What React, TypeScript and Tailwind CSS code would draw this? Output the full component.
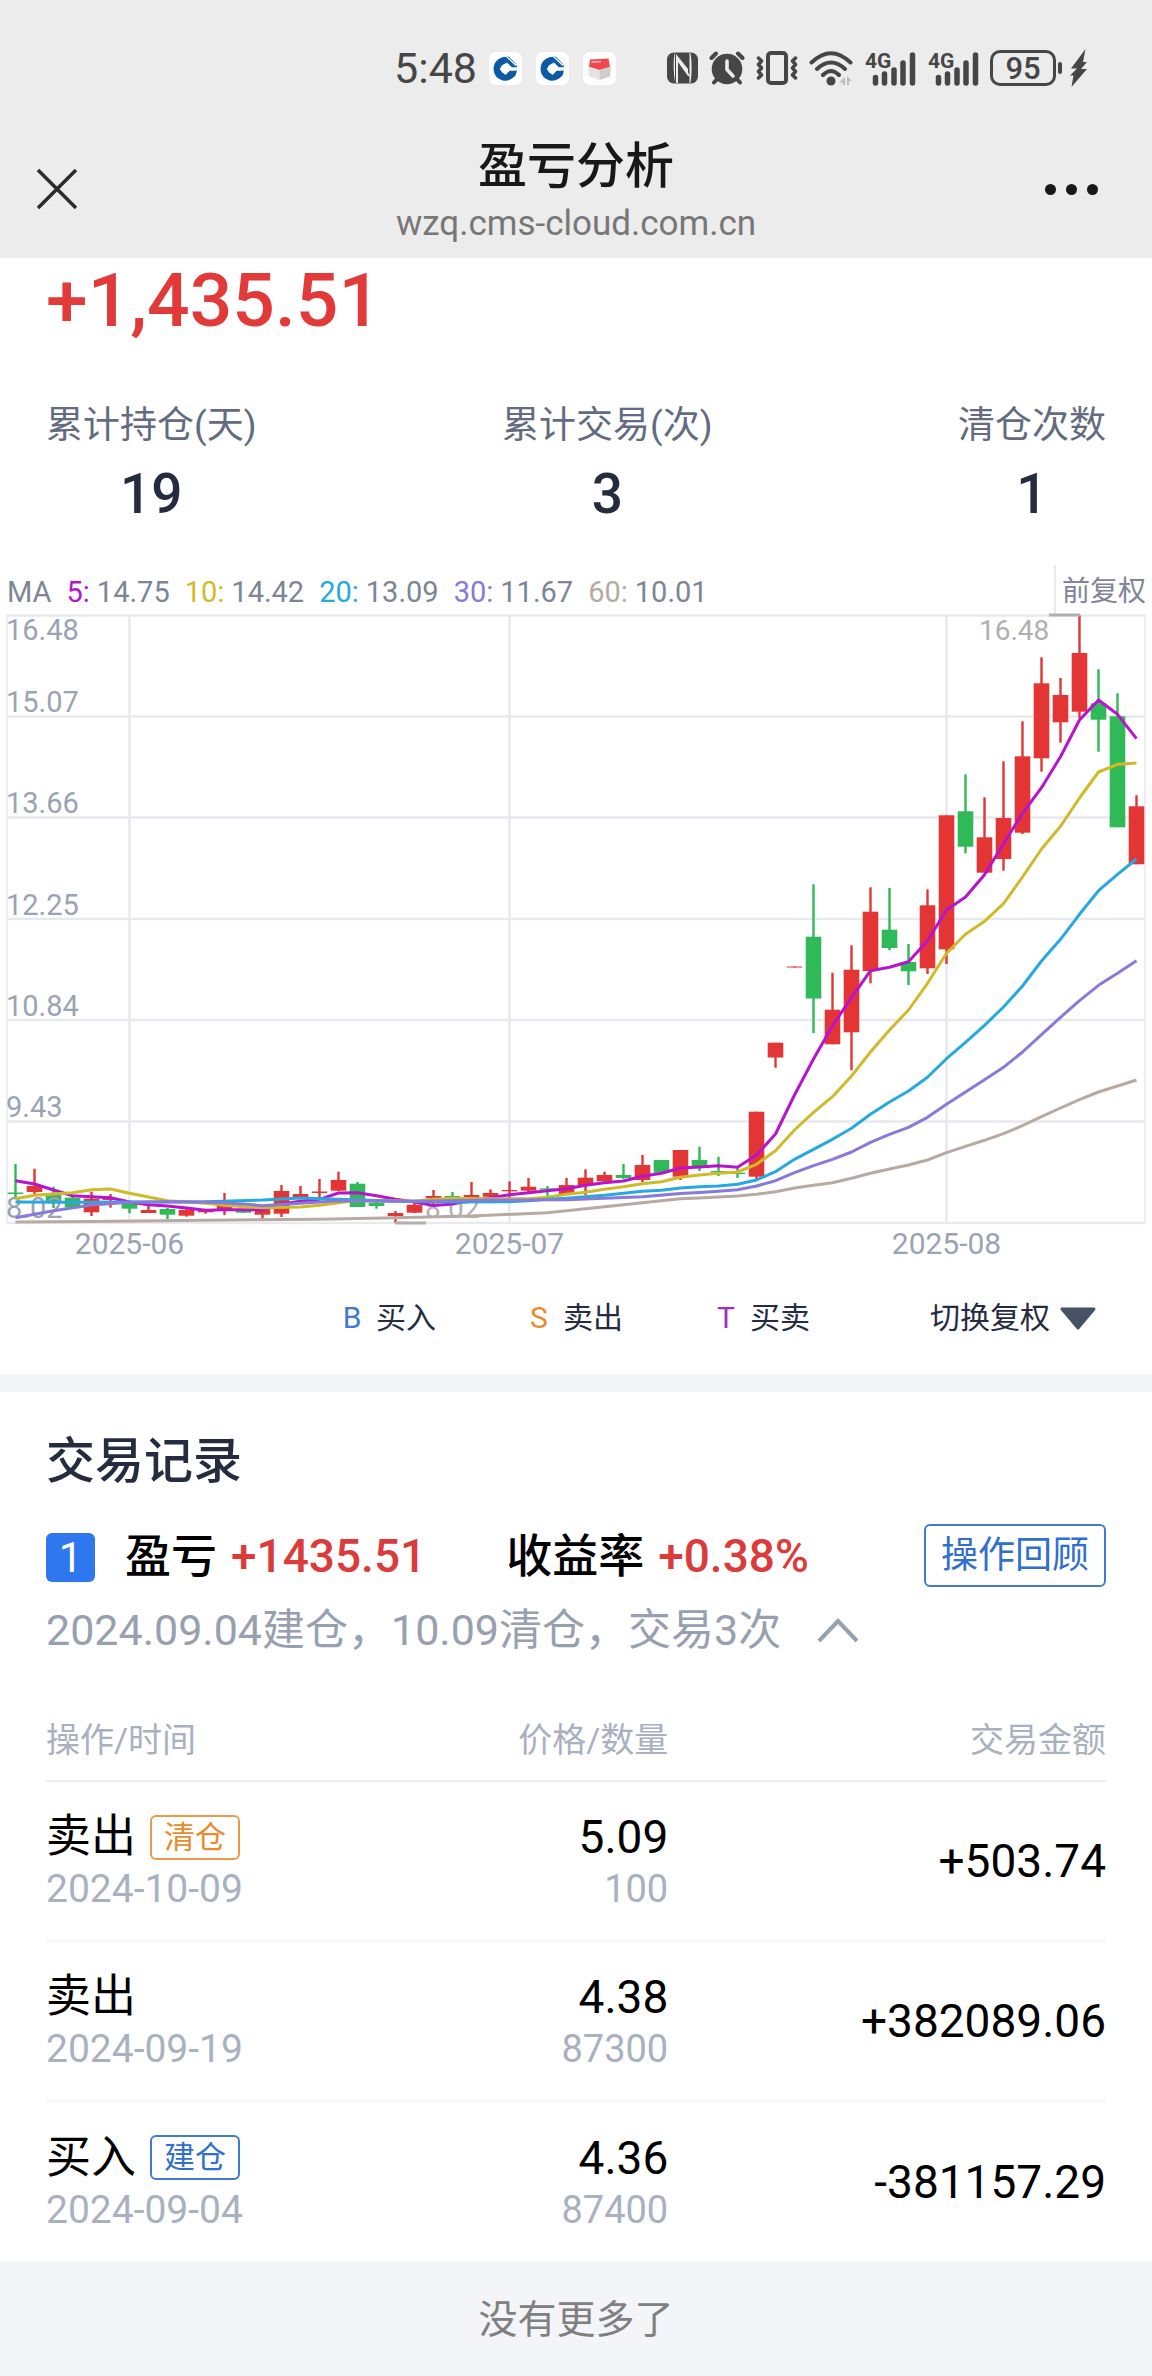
import React from "react";

type Candle = [high: number, top: number, bottom: number, low: number, rising: 0 | 1];

const STEP = 19;
const FIRST_X = 15.5;
const xOf = (i: number) => FIRST_X + STEP * i;

const candles: Candle[] = [
  [1164, 1192.5, 1194, 1199, 0], [1168.7, 1186, 1192, 1195, 1], [1186.7, 1194, 1201, 1208, 0],
  [1197, 1197.7, 1207.3, 1208, 0], [1191.7, 1198.7, 1212.3, 1216, 1], [1194, 1198.5, 1200, 1207.7, 1],
  [1202.7, 1203.7, 1208.7, 1213.3, 0], [1205.3, 1210, 1213, 1213, 1], [1208, 1209, 1214.7, 1219, 0],
  [1209, 1210, 1215.7, 1216.7, 1], [1209, 1211, 1212.3, 1213.7, 1], [1193, 1206, 1209, 1215, 1],
  [1209, 1210, 1212.7, 1213, 0], [1208, 1208.7, 1214.7, 1218.7, 1], [1185, 1191, 1213.7, 1217, 1],
  [1186, 1194, 1198.7, 1199, 1], [1179, 1191.5, 1193, 1197.7, 1], [1171.7, 1180, 1190.7, 1191, 1],
  [1182, 1183.7, 1207, 1207, 0], [1202, 1202.7, 1206, 1208.7, 0], [1211, 1213, 1216, 1223, 1],
  [1201.7, 1204.7, 1212.7, 1213, 1], [1190, 1196, 1198.3, 1204, 1], [1192, 1196, 1198.3, 1199, 0],
  [1182, 1195, 1198, 1199, 1], [1189.3, 1193, 1196.7, 1197, 1], [1181.3, 1190, 1191.3, 1198, 1],
  [1178, 1186.7, 1190.7, 1194, 1], [1186, 1188.3, 1189.7, 1196.7, 0], [1178, 1185, 1194, 1195, 1],
  [1169.3, 1177.7, 1185.3, 1195, 1], [1171.7, 1175, 1181.3, 1182, 1], [1164, 1175, 1178, 1179, 0],
  [1155, 1165, 1180, 1182, 1], [1160, 1160, 1172.7, 1173, 0], [1150, 1150, 1176.7, 1180, 1],
  [1146.7, 1160, 1167, 1171, 0], [1156.7, 1171, 1172.3, 1176, 0], [1168, 1172.7, 1174, 1178, 0],
  [1111.7, 1111.7, 1176.7, 1179, 1], [1042.7, 1042.7, 1057.5, 1067.7, 1], [966.5, 966.5, 967.5, 967.5, 1],
  [884.3, 936.7, 998.5, 1033, 0], [972.7, 1009.7, 1044.3, 1044.3, 1], [945.3, 969.7, 1032.3, 1070.3, 1],
  [887.3, 911.7, 971, 983.3, 1], [888, 929.7, 948, 950.3, 0], [944, 962, 971.3, 985, 0],
  [889.3, 905.3, 968.3, 974, 1], [815.3, 815.3, 949.3, 964, 1], [774.3, 811.3, 846.7, 853.3, 0],
  [797.3, 837.3, 872.7, 872.7, 1], [761.3, 818, 859, 870.7, 1], [721.3, 756.3, 832.7, 834, 1],
  [657.3, 683.3, 758.3, 771.7, 1], [678, 695, 722.3, 742.7, 1], [615.3, 653, 711.7, 718, 1],
  [669.3, 703.3, 719.7, 751.7, 0], [693.3, 716.3, 827.3, 827.3, 0], [795.3, 806.3, 864.3, 864.3, 1],
];

const series: { color: string; points: [number, number][] }[] = [
  {
    color: "#b6aaa3",
    points: [[0, 1222], [4, 1221.5], [10, 1220.3], [16, 1219.3], [20, 1217.7], [24, 1216], [28, 1212.7], [30, 1208.7], [33, 1202.7], [35, 1198.7], [36, 1198], [38, 1196], [39, 1194.3], [40, 1191.7], [41, 1188], [42, 1185.3], [43, 1182.7], [44, 1178.3], [45, 1173.3], [46, 1169], [47, 1165], [48, 1160], [49, 1152.7], [50, 1146.3], [51, 1140.3], [52, 1133.7], [53, 1125.7], [54, 1116.7], [55, 1108], [56, 1099.7], [57, 1092], [58, 1086], [59, 1080]],
  },
  {
    color: "#b813ce",
    points: [[0, 1180.7], [1, 1184], [2, 1190], [3, 1195.7], [4, 1196.7], [5, 1197.7], [6, 1202], [7, 1204.7], [8, 1206], [9, 1208], [10, 1210.3], [11, 1209.7], [13, 1209.7], [14, 1204], [15, 1201.3], [16, 1199.3], [17, 1193], [18, 1192.7], [19, 1195.7], [20, 1199.3], [21, 1202], [22, 1205.5], [23, 1204], [24, 1200.3], [25, 1197.7], [26, 1194.7], [27, 1192.7], [28, 1190.7], [29, 1188.7], [30, 1185.3], [31, 1182.7], [32, 1181], [33, 1176.3], [34, 1173.3], [35, 1168], [36, 1167], [37, 1165.7], [38, 1167.3], [39, 1155], [40, 1134], [41, 1095], [42, 1059], [43, 1025.7], [44, 997.7], [45, 970.7], [46, 967.3], [47, 961.7], [48, 940.7], [49, 910], [50, 897], [51, 874.7], [52, 843.7], [53, 813.3], [54, 787.7], [55, 756.7], [56, 720], [57, 700], [58, 714.3], [59, 738.7]],
  },
  {
    color: "#cfba2a",
    points: [[0, 1198.7], [1, 1195.3], [2, 1194], [3, 1192.7], [4, 1189.7], [5, 1189], [6, 1193.3], [7, 1197], [8, 1200.7], [9, 1202], [10, 1203.3], [11, 1205.3], [12, 1206.7], [13, 1207.7], [15, 1207], [16, 1205.3], [17, 1202.7], [18, 1200.3], [20, 1200.7], [21, 1201.3], [22, 1199.3], [23, 1198.3], [25, 1198.7], [27, 1198.7], [28, 1197.3], [29, 1194.3], [30, 1192.3], [31, 1189.3], [32, 1186.7], [33, 1183.7], [34, 1181.7], [35, 1177.3], [36, 1175], [37, 1173.3], [38, 1172], [39, 1164.3], [40, 1150.7], [41, 1130], [42, 1112.3], [43, 1096.7], [44, 1076], [45, 1052], [46, 1030], [47, 1010], [48, 983.3], [49, 953.3], [50, 934.3], [51, 921.3], [52, 903.7], [53, 877], [54, 849], [55, 826.3], [56, 798], [57, 772], [58, 764.3], [59, 763]],
  },
  {
    color: "#26a9e0",
    points: [[0, 1202], [3, 1202.3], [6, 1202], [10, 1201.7], [13, 1200], [15, 1198], [17, 1199.3], [20, 1201.3], [23, 1202], [26, 1201.7], [27, 1200.7], [28, 1199.3], [29, 1198.3], [30, 1196.7], [31, 1195.3], [32, 1193.3], [33, 1191.3], [34, 1190.3], [35, 1188], [36, 1186.7], [37, 1186], [38, 1184.3], [39, 1180], [40, 1171.7], [41, 1159.3], [42, 1149.3], [43, 1139.3], [44, 1128.3], [45, 1114.3], [46, 1102], [47, 1091], [48, 1077.3], [49, 1058.7], [50, 1042.3], [51, 1025.3], [52, 1007], [53, 986], [54, 961], [55, 939.3], [56, 914.3], [57, 890.7], [58, 874.3], [59, 859]],
  },
  {
    color: "#877ad9",
    points: [[0, 1217.7], [2, 1210.7], [4, 1205], [6, 1202.3], [8, 1201.7], [10, 1202], [12, 1204], [13, 1205.7], [15, 1203.3], [17, 1200.7], [20, 1201.3], [22, 1201], [25, 1200], [29, 1199.7], [31, 1198.3], [33, 1196.7], [35, 1193.5], [36, 1192.5], [37, 1191.3], [38, 1189.7], [39, 1186], [40, 1180.7], [41, 1172.7], [42, 1165.7], [43, 1159.3], [44, 1152], [45, 1142.3], [46, 1134.3], [47, 1127.3], [48, 1117.3], [49, 1104.3], [50, 1092], [51, 1079.7], [52, 1067.3], [53, 1052], [54, 1034.7], [55, 1017.3], [56, 1000.7], [57, 985.3], [58, 973.3], [59, 960.7]],
  },
];

const priceLabels: [string, number][] = [
  ["16.48", 640], ["15.07", 712], ["13.66", 813], ["12.25", 915], ["10.84", 1016], ["9.43", 1117], ["8.02", 1218],
];
const gridY = [615.5, 716.5, 817.5, 919, 1020, 1121.5, 1223];
const months: [string, number][] = [["2025-06", 129.5], ["2025-07", 509.5], ["2025-08", 946.5]];

function PriceChart() {
  return (
    <svg viewBox="0 613 1152 649" className="block h-auto w-full" role="img" aria-label="K线图">
      <g stroke="#e8e9ee" strokeWidth="2.5" fill="none">
        {gridY.map((y) => <path key={y} d={`M7 ${y}H1145`} />)}
        {months.map(([m, x]) => <path key={m} d={`M${x} 615V1223`} />)}
        <path d="M7 615V1223M1145 615V1223" strokeWidth="1.5" />
      </g>
      {candles.map(([high, top, bottom, low, rising], i) => {
        const fill = rising ? "#e43535" : "#2fb957";
        return (
          <g key={i} fill={fill}>
            <rect x={xOf(i) - 1.2} y={high} width="2.4" height={low - high} />
            <rect x={xOf(i) - 7.8} y={top} width="15.6" height={bottom - top} />
          </g>
        );
      })}
      <g fontSize="29" fill="#9aa3b5">
        {priceLabels.map(([t, y]) => <text key={t} x="6" y={y}>{t}</text>)}
      </g>
      <g fontSize="28" fill="#b0b0b0">
        <text x="425" y="1218">8.02</text>
        <text x="979" y="640">16.48</text>
        <path d="M395 1223H426M1049 615H1080" stroke="#b0b0b0" strokeWidth="3" />
      </g>
      {series.map((s) => (
        <polyline
          key={s.color}
          points={s.points.map(([i, y]) => `${xOf(i)},${y}`).join(" ")}
          fill="none"
          stroke={s.color}
          strokeWidth="3"
          strokeLinejoin="round"
        />
      ))}
      <g fontSize="30" fill="#9aa3b5" textAnchor="middle">
        {months.map(([m, x]) => <text key={m} x={x} y="1254">{m}</text>)}
      </g>
    </svg>
  );
}

function BankIcon() {
  return (
    <svg viewBox="0 0 33 33" className="size-[33px]" aria-hidden="true">
      <rect width="33" height="33" rx="7" fill="#fff" />
      <path fill="none" stroke="#0b5aa5" strokeWidth="7" d="M18 8.700A8.300 8.300 0 1 0 24.200 19.500" />
      <path fill="#0b5aa5" d="M8 17L17 8V5H14L6 12ZM16.500 22L20 19L28 18.500L26 24L17 28H14L8 20Z" />
      <path fill="#0b5aa5" d="M17 9.500L22.800 15.200H28.200A11.500 11.500 0 0 0 26.500 11.500L20 4.800L17.500 4.200Z" />
      <path d="M16.500 11L22.300 17L16.500 23L10.700 17Z" fill="#fff" />
      <path d="M17.500 4.500L27 13.500M21.500 17.200H28.500" stroke="#fff" strokeWidth="1.200" />
    </svg>
  );
}

function BoxIcon() {
  return (
    <svg viewBox="0 0 33 33" className="size-[33px]" aria-hidden="true">
      <rect width="33" height="33" rx="7" fill="#fff" />
      <path d="M7 7.500L25.500 6.500L27 15L16.500 18L6 15Z" fill="#f0474c" />
      <path d="M8.500 10L18 9.500" stroke="#fbb" strokeWidth="1.500" />
      <path d="M5 14.500L16.500 18V28L6 24.500Z" fill="#e4e2e2" />
      <path d="M28 14.500L16.500 18V28L27 24.500Z" fill="#d0cdcd" />
    </svg>
  );
}

function NfcIcon() {
  return (
    <svg viewBox="0 0 31 32" className="h-8 w-[31px]" aria-hidden="true">
      <rect y="0.500" width="31" height="31" rx="7" fill="#464646" />
      <path d="M7.500 1.500C6 10 6.500 20 8 31L11 31V10L21 24V17L9 2ZM22.500 1V31H23.500C25 22 25 10 23.500 1Z" fill="#ececec" />
      <path d="M11.500 9L22.500 24" fill="none" stroke="#ececec" strokeWidth="1.500" />
      <path d="M8.500 2V31" fill="none" stroke="#464646" strokeWidth="1" />
    </svg>
  );
}

function AlarmIcon() {
  return (
    <svg viewBox="0 0 36 34" className="h-[34px] w-9" aria-hidden="true">
      <g stroke="#464646" strokeWidth="4" strokeLinecap="round" fill="none">
        <path d="M2.500 7L7 2.500M33.500 7L29 2.500M9 27L5 31.500M27 27L31 31.500" />
      </g>
      <circle cx="18" cy="18" r="15.300" fill="#464646" />
      <path d="M18 10V18.500L24 25" fill="none" stroke="#ececec" strokeWidth="3.600" strokeLinecap="round" />
    </svg>
  );
}

function VibrateIcon() {
  return (
    <svg viewBox="0 0 42 34" className="h-[34px] w-[42px]" aria-hidden="true">
      <g fill="none" stroke="#464646" strokeLinecap="round" strokeLinejoin="round">
        <rect x="12" y="2" width="18" height="30" rx="3" strokeWidth="4" />
        <path d="M2.500 7L5.500 10L2.500 13.500L5.500 17L2.500 20.500L5.500 24L2.500 27M39.500 7L36.500 10L39.500 13.500L36.500 17L39.500 20.500L36.500 24L39.500 27" strokeWidth="3.500" />
      </g>
    </svg>
  );
}

function WifiIcon() {
  return (
    <svg viewBox="0 0 44 35" className="h-[35px] w-11" aria-hidden="true">
      <g fill="none" stroke="#464646" strokeWidth="4" strokeLinecap="round">
        <path d="M2.500 11.500Q22 -7 41.500 11.500M8 18Q22 5 36 18M14 24Q22 16 30 24" />
      </g>
      <circle cx="22" cy="30" r="4.500" fill="#464646" />
      <path d="M36 26V34H34V31.500H30ZM38 34V25L43 30H40V34Z" fill="#bdbdbd" />
    </svg>
  );
}

function SignalIcon() {
  return (
    <svg viewBox="-1 -3 52 41" className="h-[41px] w-[52px]" aria-hidden="true">
      <text x="0" y="17" fontSize="21" fontWeight="700" fill="#464646">4G</text>
      <path d="M10.500 26.500V32M19.500 23V32M29 19V32M38 12V32M47.500 4V32" stroke="#464646" strokeWidth="5.500" strokeLinecap="round" />
    </svg>
  );
}

function StatusBar() {
  return (
    <div className="flex h-[136px] items-center justify-end pr-[64px] text-[#464646]">
      <span className="mr-3 text-[43px] leading-none">5:48</span>
      <div className="mr-[51px] flex gap-[14px]">
        <BankIcon />
        <BankIcon />
        <BoxIcon />
      </div>
      <div className="flex items-center gap-[11px]">
        <NfcIcon />
        <AlarmIcon />
        <VibrateIcon />
        <WifiIcon />
        <SignalIcon />
        <SignalIcon />
        <div className="flex items-center gap-[2px]">
          <span className="flex h-9 w-[66px] items-center justify-center rounded-[10px] border-[3px] border-[#464646] text-[31px] leading-none font-medium">
            95
          </span>
          <span className="h-3 w-1 rounded-full bg-[#464646]" />
          <svg viewBox="0 0 18 38" className="ml-[6px] h-[38px] w-[18px]" aria-hidden="true">
            <path d="M15.500 0L1 19.500H7L0 26.500H3.500L1.500 38L17 20H11L17 13H13Z" fill="#464646" />
          </svg>
        </div>
      </div>
    </div>
  );
}

function Header() {
  return (
    <header className="bg-[#ececec]">
      <StatusBar />
      <div className="grid h-[122px] grid-cols-[1fr_auto_1fr] items-start px-9">
        <button type="button" aria-label="关闭" className="mt-8 size-[42px]">
          <svg viewBox="0 0 42 42" className="size-full" aria-hidden="true">
            <path d="M2 2L40 40M40 2L2 40" stroke="#2b2b2b" strokeWidth="3.500" />
          </svg>
        </button>
        <div className="text-center">
          <h1 className="text-[49px] leading-[62px] font-medium text-[#181818]">盈亏分析</h1>
          <p className="text-[35px] leading-[52px] text-[#777]">wzq.cms-cloud.com.cn</p>
        </div>
        <button type="button" aria-label="更多" className="mt-8 mr-[18px] flex h-[42px] items-center gap-[10px] justify-self-end">
          <span className="size-[11px] rounded-full bg-[#181818]" />
          <span className="size-[11px] rounded-full bg-[#181818]" />
          <span className="size-[11px] rounded-full bg-[#181818]" />
        </button>
      </div>
    </header>
  );
}

function Stat({ label, value }: { label: string; value: string }) {
  return (
    <div className="text-center">
      <dt className="text-[37px] leading-[60px] text-[#636b80]">{label}</dt>
      <dd className="mt-1 text-[55px] leading-[68px] font-medium text-[#252c3f]">{value}</dd>
    </div>
  );
}

function Average({ days, value, tone }: { days: string; value: string; tone: string }) {
  return (
    <span className="whitespace-nowrap">
      <span className={`mr-[7px] ${tone}`}>{days}:</span>
      {value}
    </span>
  );
}

function LegendItem({ mark, label, tone }: { mark: string; label: string; tone: string }) {
  return (
    <span className="flex gap-[14px]">
      <span className={`w-5 text-center ${tone}`}>{mark}</span>
      {label}
    </span>
  );
}

const records = [
  { action: "卖出", tag: "清仓", tagTone: "border-[#eb9a45] text-[#e98b2c]", date: "2024-10-09", price: "5.09", qty: "100", amount: "+503.74" },
  { action: "卖出", tag: "", tagTone: "", date: "2024-09-19", price: "4.38", qty: "87300", amount: "+382089.06" },
  { action: "买入", tag: "建仓", tagTone: "border-[#3f7bd0] text-[#2f6fce]", date: "2024-09-04", price: "4.36", qty: "87400", amount: "-381157.29" },
];

export default function App() {
  return (
    <div className="min-h-screen bg-white font-['Roboto','Noto_Sans_CJK_SC',sans-serif]">
      <Header />
      <main>
        <section className="px-[46px]">
          <p className="h-[138px] text-[75px] leading-[84px] font-medium text-[#e23a39]">+1,435.51</p>
          <dl className="flex justify-between">
            <Stat label="累计持仓(天)" value="19" />
            <Stat label="累计交易(次)" value="3" />
            <Stat label="清仓次数" value="1" />
          </dl>
        </section>

        <section className="pt-[39px]">
          <div className="flex h-[46px] items-center pr-[6px] pl-[7px] text-[29px] leading-[46px] text-[#7d8596]">
            <div className="flex gap-[15px] pt-1">
              <span>MA</span>
              <Average days="5" value="14.75" tone="text-[#b813ce]" />
              <Average days="10" value="14.42" tone="text-[#cfba2a]" />
              <Average days="20" value="13.09" tone="text-[#26a9e0]" />
              <Average days="30" value="11.67" tone="text-[#877ad9]" />
              <Average days="60" value="10.01" tone="text-[#b6aaa3]" />
            </div>
            <span className="ml-auto border-l-2 border-[#e8e9ee] pt-1 pl-[6px] text-[28px]">前复权</span>
          </div>
          <PriceChart />
          <div className="flex h-[112px] items-center justify-end pr-[56px] text-[30px] leading-[44px] text-[#252c3f]">
            <div className="mr-[120px] flex gap-[93px]">
              <LegendItem mark="B" label="买入" tone="text-[#3f7bd0]" />
              <LegendItem mark="S" label="卖出" tone="text-[#e98b2c]" />
              <LegendItem mark="T" label="买卖" tone="text-[#a22cc4]" />
            </div>
            <button type="button" className="flex items-center gap-[10px]">
              切换复权
              <svg viewBox="0 0 36 23" className="h-[23px] w-9" aria-hidden="true">
                <path d="M2 2H34L18 21Z" fill="#465266" stroke="#465266" strokeWidth="3" strokeLinejoin="round" />
              </svg>
            </button>
          </div>
        </section>

        <div className="h-[18px] bg-[#f4f5f9]" />

        <section className="px-[46px] pt-9">
          <h2 className="text-[49px] leading-[68px] font-medium text-[#252c3f]">交易记录</h2>
          <div className="mt-7 flex h-[63px] items-center text-[46px] leading-[60px] font-medium text-black">
            <span className="mt-1 flex h-[49px] w-[49px] items-center justify-center rounded-md bg-[#2f77ee] text-[42px] leading-none font-normal text-white">
              1
            </span>
            <span className="ml-[30px]">
              盈亏<span className="ml-[14px] text-[#dc3b3b]">+1435.51</span>
            </span>
            <span className="ml-20">
              收益率<span className="ml-[14px] text-[#dc3b3b]">+0.38%</span>
            </span>
            <button type="button" className="ml-auto h-[63px] rounded-md border-2 border-[#3f7bd0] px-[15px] text-[37px] leading-[58px] font-normal text-[#2f6fce]">
              操作回顾
            </button>
          </div>
          <button type="button" className="mt-3 flex items-center text-[43px] leading-[62px] text-[#98a0b0]">
            2024.09.04建仓，10.09清仓，交易3次
            <svg viewBox="0 0 42 26" className="ml-9 h-[26px] w-[42px]" aria-hidden="true">
              <path d="M2 24L21 4L40 24" fill="none" stroke="#98a0b0" strokeWidth="4" />
            </svg>
          </button>

          <table className="mt-[39px] w-full table-fixed text-black">
            <colgroup>
              <col className="w-[30%]" />
              <col />
              <col className="w-[41.3%]" />
            </colgroup>
            <thead>
              <tr className="h-[81px] border-b-2 border-[#eceef1] text-[34px] leading-[48px] text-[#a9b0c0]">
                <th className="p-0 text-left font-normal">操作/时间</th>
                <th className="p-0 text-right font-normal">价格/数量</th>
                <th className="p-0 text-right font-normal">交易金额</th>
              </tr>
            </thead>
            <tbody>
              {records.map((r) => (
                <tr key={r.date} className="h-40 border-b-2 border-[#f4f5f7] last:border-b-0">
                  <td className="p-0">
                    <div className="flex items-center text-[45px] leading-[56px]">
                      {r.action}
                      {r.tag && (
                        <span className={`ml-[14px] h-[45px] rounded-md border-2 px-3 text-[31px] leading-[41px] ${r.tagTone}`}>
                          {r.tag}
                        </span>
                      )}
                    </div>
                    <div className="text-[39px] leading-[48px] text-[#a9b1c1]">{r.date}</div>
                  </td>
                  <td className="p-0 text-right">
                    <div className="text-[46px] leading-[56px]">{r.price}</div>
                    <div className="text-[38px] leading-[48px] text-[#a9b1c1]">{r.qty}</div>
                  </td>
                  <td className="p-0 text-right text-[46px] leading-[56px]">{r.amount}</td>
                </tr>
              ))}
            </tbody>
          </table>
        </section>
      </main>
      <footer className="bg-[#f4f5f9] pt-[3px] text-center text-[39px] leading-[112px] text-[#808080]">没有更多了</footer>
    </div>
  );
}
